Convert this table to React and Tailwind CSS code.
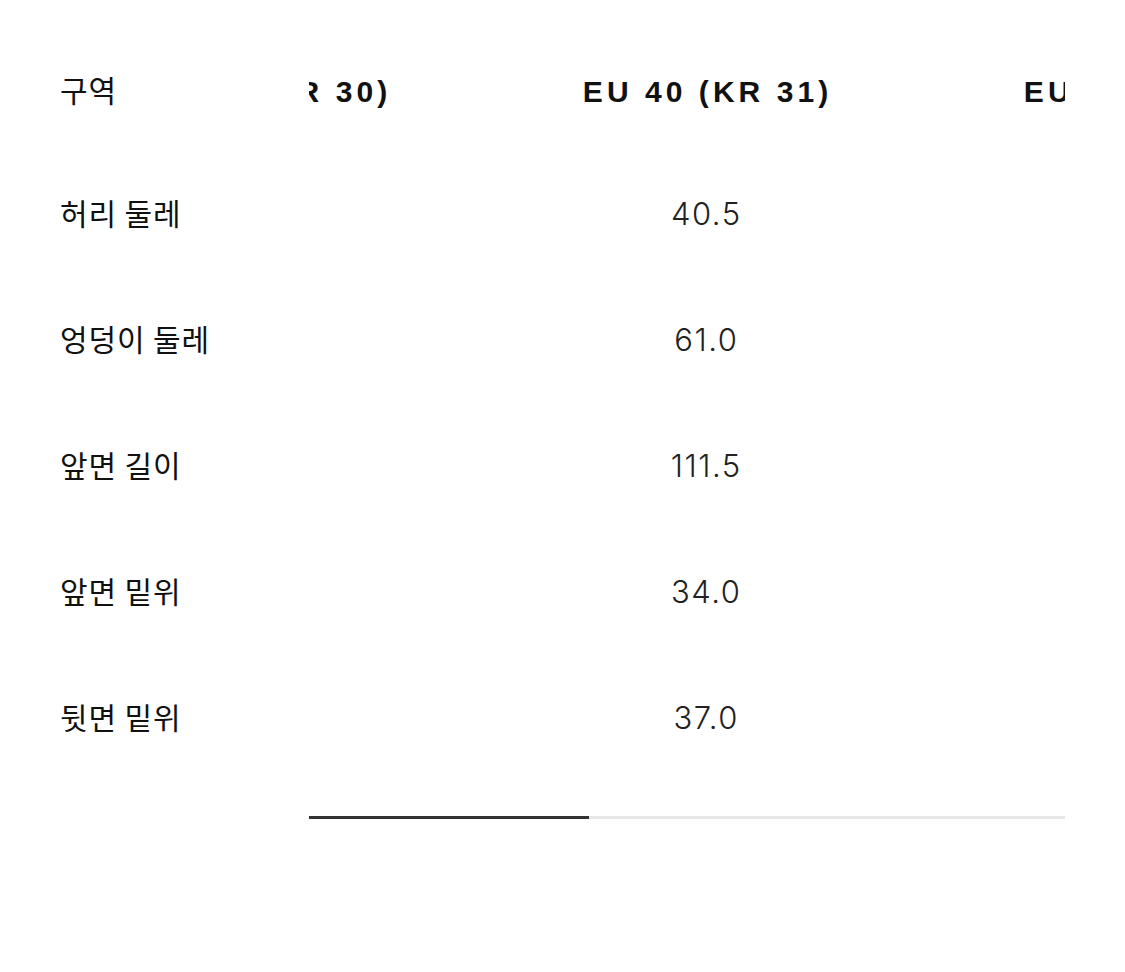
import React from "react";

const labels = ["허리 둘레", "엉덩이 둘레", "앞면 길이", "앞면 밑위", "뒷면 밑위"];
const cols = [
  { h: "EU 39 (KR 30)", v: ["39.0", "59.5", "111.0", "33.5", "36.5"] },
  { h: "EU 40 (KR 31)", v: ["40.5", "61.0", "111.5", "34.0", "37.0"] },
  { h: "EU 41 (KR 32)", v: ["42.0", "62.5", "112.0", "34.5", "37.5"] },
];

const kr = { fontFamily: '"Noto Sans CJK KR", "Noto Sans", sans-serif' };
const hd = { fontFamily: '"Liberation Sans", Arial, sans-serif' };
const num = { fontFamily: 'Inter, "Liberation Sans", sans-serif' };

export default function App() {
  return (
    <div className="w-[1125px] h-[972px] bg-white text-[#111]">
      <div className="flex pl-[60px] pt-[31px]">
        <div className="w-[249px] shrink-0" style={kr}>
          <div className="h-[120px] flex items-center pb-[3px] text-[30px] tracking-[0.03em]">구역</div>
          {labels.map((l) => (
            <div key={l} className="h-[126px] flex items-center pb-[4px] text-[30px] tracking-[0.03em]">
              {l}
            </div>
          ))}
        </div>
        <div className="w-[756px] shrink-0 flex flex-col">
          <div className="overflow-hidden">
            <div className="flex ml-[-265px]">
              {cols.map((c) => (
                <div key={c.h} className="w-[441px] shrink-0 flex flex-col items-center">
                  <div
                    className="h-[120px] flex items-center text-[30px] font-bold tracking-[0.135em] whitespace-nowrap pl-[0.135em]"
                    style={hd}
                  >
                    {c.h}
                  </div>
                  {c.v.map((v, i) => (
                    <div
                      key={i}
                      className="h-[126px] flex items-center text-[31px] font-light tracking-[0.05em] pl-[0.05em] text-[#222]"
                      style={num}
                    >
                      {v}
                    </div>
                  ))}
                </div>
              ))}
            </div>
          </div>
          <div className="mt-[35px] h-[3px] bg-[#e6e6e6] flex">
            <div className="w-[280px] h-[3px] bg-[#333]" />
          </div>
        </div>
      </div>
    </div>
  );
}
